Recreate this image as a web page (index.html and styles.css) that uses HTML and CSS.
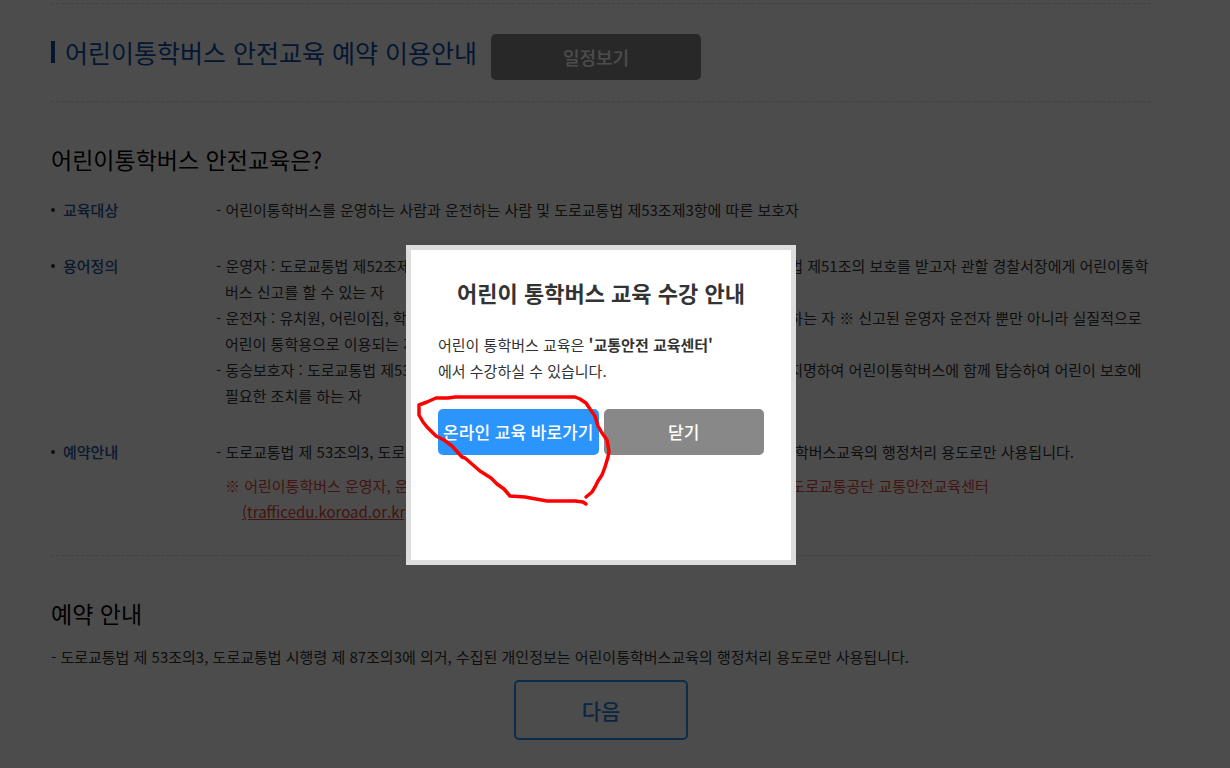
FILE: index.html
```
<!DOCTYPE html>
<html lang="ko">
<head>
    <meta charset="UTF-8">
    <meta name="viewport" content="width=device-width, initial-scale=1.0">
    <title>어린이통학버스 안전교육 예약 이용안내</title>
    <link rel="stylesheet" href="styles.css">
</head>
<body>
    <div class="container">
        <div class="page-title">
            <h2>어린이통학버스 안전교육 예약 이용안내</h2>
            <button type="button" class="btn btn-schedule">일정보기</button>
        </div>

        <section class="guide">
            <h3>어린이통학버스 안전교육은?</h3>
            <dl class="info">
                <dt>교육대상</dt>
                <dd>
                    <p class="dash">어린이통학버스를 운영하는 사람과 운전하는 사람 및 도로교통법 제53조제3항에 따른 보호자</p>
                </dd>
                <dt>용어정의</dt>
                <dd>
                    <p class="dash">운영자 : 도로교통법 제52조제3항에 따라 어린이통학버스를 직접 운영하는 자로서 도로교통법 제51조의 보호를 받고자 관할 경찰서장에게 어린이통학버스 신고를 할 수 있는 자</p>
                    <p class="dash">운전자 : 유치원, 어린이집, 학원, 체육시설 등에서 어린이 통학에 쓰이는 자동차를 직접 운전하는 자 ※ 신고된 운영자 운전자 뿐만 아니라 실질적으로 어린이 통학용으로 이용되는 자동차를 운전하는 자</p>
                    <p class="dash">동승보호자 : 도로교통법 제53조제3항에 따라 어린이통학버스의 운영자가 성년인 자중에서 지명하여 어린이통학버스에 함께 탑승하여 어린이 보호에 필요한 조치를 하는 자</p>
                </dd>
                <dt>예약안내</dt>
                <dd>
                    <p class="dash">도로교통법 제 53조의3, 도로교통법 시행령 제 87조의3에 의거, 수집된 개인정보는 어린이통학버스교육의 행정처리 용도로만 사용됩니다.</p>
                    <p class="notice">※ 어린이통학버스 운영자, 운전자, 동승보호자의 안전교육 예약 및 온라인 수강신청 문의는 도로교통공단 교통안전교육센터<br><a href="#">(trafficedu.koroad.or.kr)</a></p>
                </dd>
            </dl>
        </section>

        <section class="reserve">
            <h3>예약 안내</h3>
            <p class="dash">도로교통법 제 53조의3, 도로교통법 시행령 제 87조의3에 의거, 수집된 개인정보는 어린이통학버스교육의 행정처리 용도로만 사용됩니다.</p>
            <button type="button" class="btn-next">다음</button>
        </section>
    </div>

    <!-- 교육 수강 안내 팝업 -->
    <div class="overlay">
        <div class="modal" role="dialog" aria-labelledby="modalTitle">
            <h4 id="modalTitle">어린이 통학버스 교육 수강 안내</h4>
            <p>어린이 통학버스 교육은 <strong>'교통안전 교육센터'</strong><br>에서 수강하실 수 있습니다.</p>
            <div class="modal-buttons">
                <a href="#" class="btn btn-online">온라인 교육 바로가기</a>
                <button type="button" class="btn btn-close">닫기</button>
            </div>
            <svg class="marker" width="210" height="125" viewBox="0 0 210 125" aria-hidden="true">
                <path d="M175 107 L181 102 L184 97 L187 91 L191 85 L194 77 L197 67 L198 61 L196 50 L191 43 L187 36 L184 26 L179 19 L175 13 L169 9 L164 7 L44 7 L37 8 L25 8 L16 12 L8 15 L8 25 L12 32 L16 37 L25 46 L33 50 L41 56 L51 67 L54 68 L69 81 L80 88 L86 94 L93 99 L99 106 L114 107 L136 111 L164 111 L172 112 L175 114"/>
            </svg>
        </div>
    </div>
</body>
</html>
```
FILE: styles.css
```
* {
    box-sizing: border-box;
}

body {
    font-family: "Noto Sans CJK KR", "Noto Sans", sans-serif;
    font-size: 15px;
    line-height: 26px;
    color: #333;
    background-color: #fff;
    margin: 0;
}

h2, h3, h4, p, dl, dd {
    margin: 0;
}

button {
    font-family: inherit;
    cursor: pointer;
}

.container {
    margin: 3px 79px 0 51px;
}

.page-title {
    display: flex;
    align-items: flex-start;
    gap: 14px;
    padding: 30px 0 21px;
    border-top: 1px dashed #ddd;
    border-bottom: 1px dashed #ddd;
}

.page-title h2 {
    display: flex;
    align-items: center;
    gap: 10px;
    font-size: 25px;
    font-weight: 400;
    line-height: 36px;
    color: #0f4fa8;
}

.page-title h2::before {
    content: "";
    width: 4px;
    height: 22px;
    background-color: #0f4fa8;
}

.btn {
    height: 46px;
    border: none;
    border-radius: 5px;
    color: #fff;
    background-color: #888;
    font-size: 17px;
    font-weight: 500;
    line-height: 46px;
    text-align: center;
    text-decoration: none;
    padding: 0;
}

.btn-schedule {
    width: 210px;
    font-size: 18px;
    line-height: 44px;
}

h3 {
    font-size: 23px;
    font-weight: 400;
    line-height: 34px;
    color: #000;
}

.guide {
    padding: 40px 0 30px;
    border-bottom: 1px dashed #ddd;
}

.info {
    display: grid;
    grid-template-columns: 165px 1fr;
    row-gap: 30px;
    margin-top: 21px;
}

.info dt {
    display: flex;
    align-items: center;
    gap: 8px;
    height: 26px;
    font-weight: 500;
    color: #1f54a0;
}

.info dt::before {
    content: "";
    width: 4px;
    height: 4px;
    border-radius: 50%;
    background-color: #333;
}

.dash {
    padding-left: 9px;
    text-indent: -9px;
}

.dash::before {
    content: "- ";
}

.notice {
    margin-top: 8px;
    padding-left: 26px;
    text-indent: -17px;
    color: #e0483a;
}

.notice a {
    color: inherit;
}

.reserve {
    padding-top: 40px;
}

.reserve .dash {
    margin-top: 14px;
}

.btn-next {
    display: block;
    width: 174px;
    height: 60px;
    margin: 10px auto 0;
    border: 2px solid #2b95fb;
    border-radius: 5px;
    color: #2b7fe0;
    background-color: #fff;
    font-size: 21px;
    font-weight: 500;
}

.overlay {
    display: flex;
    justify-content: center;
    align-items: center;
    position: fixed;
    top: 0;
    left: 0;
    width: 100%;
    height: 100%;
    padding: 42px 28px 0 0;
    background-color: rgba(0,0,0,0.7);
}

.modal {
    position: relative;
    width: 390px;
    min-height: 320px;
    padding: 26px 27px;
    border: 5px solid #ddd;
    background-color: #fff;
}

.modal h4 {
    font-size: 22px;
    font-weight: 700;
    line-height: 32px;
    text-align: center;
    margin-bottom: 24px;
}

.modal-buttons {
    display: grid;
    grid-template-columns: repeat(2, minmax(0, 1fr));
    gap: 5px;
    margin-top: 25px;
}

.btn-online {
    background-color: #2b95fb;
}

.marker {
    position: absolute;
    left: 0;
    top: 140px;
    fill: none;
    stroke: #f00;
    stroke-width: 3.5;
    stroke-linecap: round;
    stroke-linejoin: round;
}
```
